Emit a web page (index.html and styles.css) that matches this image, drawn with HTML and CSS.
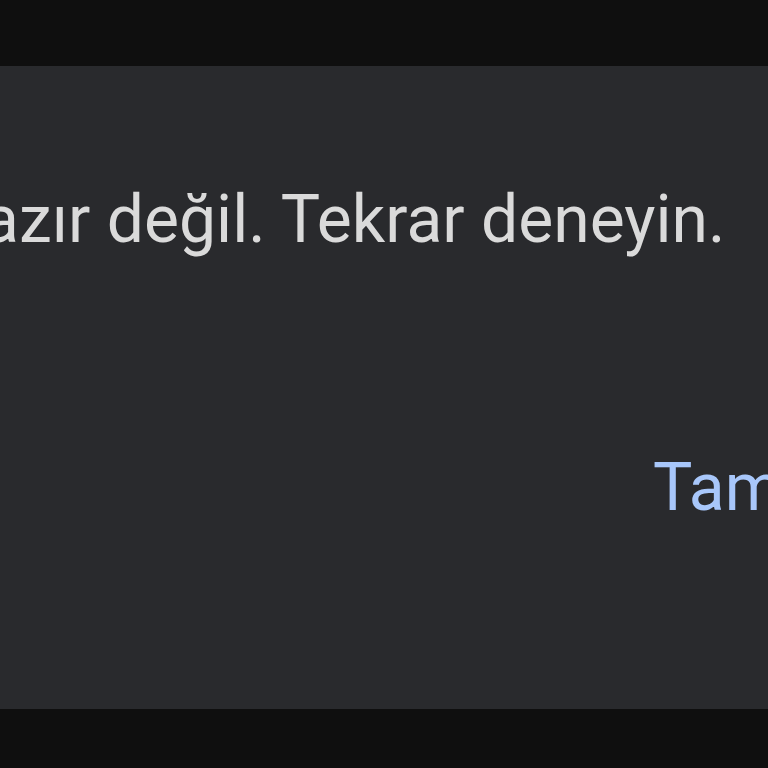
FILE: index.html
```html
<!DOCTYPE html>
<html>
<head>
    <title>Hata</title>
    <meta charset="UTF-8">
    <link rel="stylesheet" href="styles.css">
</head>
<body>
    <div class="top-bar"></div>
    <div class="dialog">
        <p class="dialog-text">Hazır değil. Tekrar deneyin.</p>
        <div class="dialog-actions">
            <button class="text-button">Tamam</button>
        </div>
    </div>
    <div class="bottom-bar"></div>
</body>
</html>
```

FILE: styles.css
```css
body {
    margin: 0;
    overflow: hidden;
    background: #0f0f0f;
    font-family: Roboto, 'Noto Sans', Arial, sans-serif;
}

.top-bar {
    height: 66px;
}

.dialog {
    height: 643px;
    margin-left: -64px;
    width: 1000px;
    background: #292a2d;
    box-sizing: border-box;
    padding-top: 121px;
}

.dialog-text {
    margin: 0;
    font-size: 66px;
    line-height: 1;
    color: #dadada;
}

.dialog-actions {
    margin-top: 202px;
    padding-left: 717px;
}

.text-button {
    background: none;
    border: none;
    padding: 0;
    font-family: inherit;
    font-size: 66px;
    line-height: 1;
    color: #a8c7fa;
}
```
